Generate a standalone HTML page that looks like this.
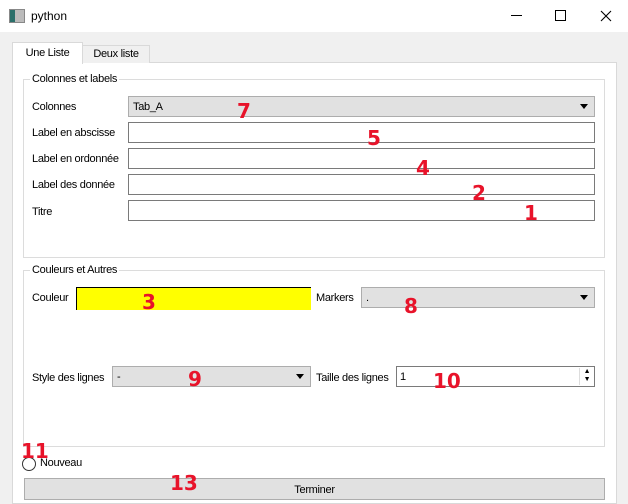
<!DOCTYPE html><html><head><style>
body{margin:0;width:628px;height:493px;overflow:hidden;background:#f0f0f0;font-family:"Liberation Sans",sans-serif;font-size:11px;letter-spacing:-0.3px;color:#000;position:relative}
.a{position:absolute}
.in{position:absolute;background:#fff;border:1px solid #7a7a7a;box-sizing:border-box;height:21px}
.cb{position:absolute;background:#e1e1e1;border:1px solid #adadad;box-sizing:border-box;height:21px;padding:4px 4px 0}
.cb:after{content:"";position:absolute;right:6px;top:7px;border-left:4px solid transparent;border-right:4px solid transparent;border-top:5px solid #000}
.gb{position:absolute;border:1px solid #dcdcdc}
.gt{position:absolute;background:#fff;padding:0 2px}
.n{position:absolute;color:#e8132a;font-weight:bold;font-size:20px;font-family:"DejaVu Sans",sans-serif;letter-spacing:0}
</style></head><body>
<div class="a" style="left:0;top:0;width:628px;height:32px;background:#fff"></div>
<div class="a" style="left:9px;top:9px;width:14px;height:12px;border:1px solid #888;background:linear-gradient(90deg,#2a6f6a 0 5px,#bbb 5px)"></div>
<div class="a" style="left:31px;top:9px;font-size:12px;letter-spacing:0">python</div>
<div class="a" style="left:511px;top:15px;width:11px;height:1px;background:#000"></div>
<div class="a" style="left:555px;top:10px;width:9px;height:9px;border:1px solid #000"></div>
<svg class="a" style="left:600px;top:10px" width="12" height="12"><path d="M1 1L11 11M11 1L1 11" stroke="#000" stroke-width="1.1"/></svg>
<div class="a" style="left:12px;top:62px;width:603px;height:440px;background:#fff;border:1px solid #d9d9d9"></div>
<div class="a" style="left:82px;top:45px;width:66px;height:17px;background:#f0f0f0;border:1px solid #d9d9d9;border-bottom:none;text-align:center;line-height:17px">Deux liste</div>
<div class="a" style="left:12px;top:42px;width:69px;height:21px;background:#fff;border:1px solid #d9d9d9;border-bottom:none;text-align:center;line-height:20px">Une Liste</div>
<div class="gb" style="left:23px;top:79px;width:580px;height:177px"></div>
<div class="gt" style="left:30px;top:73px">Colonnes et labels</div>
<div class="a" style="left:32px;top:101px">Colonnes</div>
<div class="cb" style="left:128px;top:96px;width:467px">Tab_A</div>
<div class="a" style="left:32px;top:127px">Label en abscisse</div>
<div class="in" style="left:128px;top:122px;width:467px"></div>
<div class="a" style="left:32px;top:153px">Label en ordonnée</div>
<div class="in" style="left:128px;top:148px;width:467px"></div>
<div class="a" style="left:32px;top:179px">Label des donnée</div>
<div class="in" style="left:128px;top:174px;width:467px"></div>
<div class="a" style="left:32px;top:206px">Titre</div>
<div class="in" style="left:128px;top:200px;width:467px"></div>
<div class="gb" style="left:23px;top:270px;width:580px;height:175px"></div>
<div class="gt" style="left:30px;top:264px">Couleurs et Autres</div>
<div class="a" style="left:32px;top:292px">Couleur</div>
<div class="a" style="left:76px;top:287px;width:235px;height:23px;background:#ff0;border-top:1px solid #000;border-left:1px solid #000;box-sizing:border-box"></div>
<div class="a" style="left:316px;top:292px">Markers</div>
<div class="cb" style="left:361px;top:287px;width:234px">.</div>
<div class="a" style="left:32px;top:372px">Style des lignes</div>
<div class="cb" style="left:112px;top:366px;width:199px">-</div>
<div class="a" style="left:316px;top:372px">Taille des lignes</div>
<div class="in" style="left:396px;top:366px;width:199px;padding:4px 3px;border-color:#7a7a7a">1</div>
<div class="a" style="left:579px;top:368px;width:14px;height:17px;border-left:1px solid #ddd;font-size:7px;line-height:8px;text-align:center">▲<br>▼</div>
<div class="a" style="left:22px;top:457px;width:12px;height:12px;border:1px solid #333;border-radius:50%;background:#fff"></div>
<div class="a" style="left:40px;top:457px">Nouveau</div>
<div class="a" style="left:24px;top:478px;width:579px;height:20px;background:#e1e1e1;border:1px solid #adadad;text-align:center;line-height:22px">Terminer</div>
<div class="n" style="left:237px;top:99px">7</div>
<div class="n" style="left:367px;top:126px">5</div>
<div class="n" style="left:416px;top:156px">4</div>
<div class="n" style="left:472px;top:181px">2</div>
<div class="n" style="left:524px;top:201px">1</div>
<div class="n" style="left:142px;top:290px">3</div>
<div class="n" style="left:404px;top:294px">8</div>
<div class="n" style="left:188px;top:367px">9</div>
<div class="n" style="left:433px;top:369px">10</div>
<div class="n" style="left:21px;top:439px">11</div>
<div class="n" style="left:170px;top:471px">13</div>
</body></html>
